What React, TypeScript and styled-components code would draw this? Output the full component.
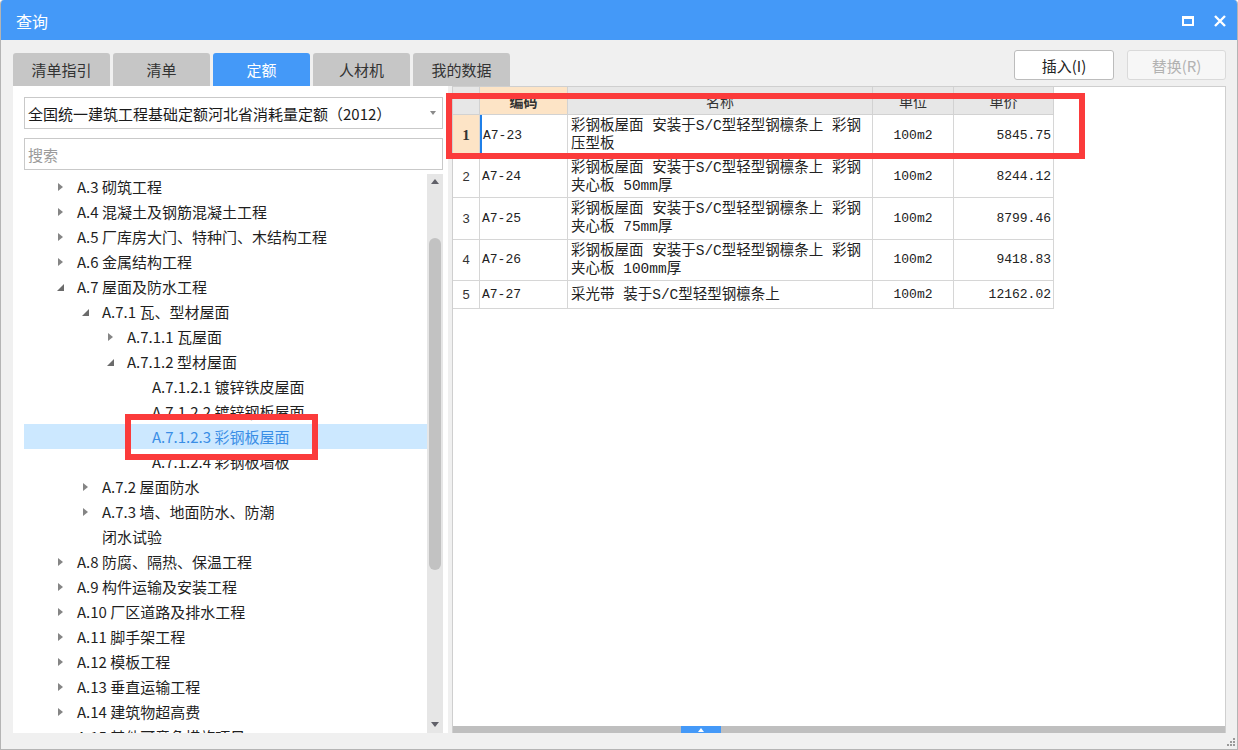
import React from "react";
import styled, { createGlobalStyle } from "styled-components";

const GlobalStyle = createGlobalStyle`
  html, body {
    margin: 0;
    padding: 0;
    background: #ffffff;
  }
  body {
    font-family: "Noto Sans CJK SC", "Noto Sans", sans-serif;
    color: #222;
  }
`;

const tabs = ["清单指引", "清单", "定额", "人材机", "我的数据"];

type TreeItem = {
  level: number;
  label: string[];
  caret?: "open" | "closed";
  selected?: boolean;
};

const tree: TreeItem[] = [
  { level: 1, label: ["A.3 砌筑工程"], caret: "closed" },
  { level: 1, label: ["A.4 混凝土及钢筋混凝土工程"], caret: "closed" },
  { level: 1, label: ["A.5 厂库房大门、特种门、木结构工程"], caret: "closed" },
  { level: 1, label: ["A.6 金属结构工程"], caret: "closed" },
  { level: 1, label: ["A.7 屋面及防水工程"], caret: "open" },
  { level: 2, label: ["A.7.1 瓦、型材屋面"], caret: "open" },
  { level: 3, label: ["A.7.1.1 瓦屋面"], caret: "closed" },
  { level: 3, label: ["A.7.1.2 型材屋面"], caret: "open" },
  { level: 4, label: ["A.7.1.2.1 镀锌铁皮屋面"] },
  { level: 4, label: ["A.7.1.2.2 镀锌钢板屋面"] },
  { level: 4, label: ["A.7.1.2.3 彩钢板屋面"], selected: true },
  { level: 4, label: ["A.7.1.2.4 彩钢板墙板"] },
  { level: 2, label: ["A.7.2 屋面防水"], caret: "closed" },
  { level: 2, label: ["A.7.3 墙、地面防水、防潮", "闭水试验"], caret: "closed" },
  { level: 1, label: ["A.8 防腐、隔热、保温工程"], caret: "closed" },
  { level: 1, label: ["A.9 构件运输及安装工程"], caret: "closed" },
  { level: 1, label: ["A.10 厂区道路及排水工程"], caret: "closed" },
  { level: 1, label: ["A.11 脚手架工程"], caret: "closed" },
  { level: 1, label: ["A.12 模板工程"], caret: "closed" },
  { level: 1, label: ["A.13 垂直运输工程"], caret: "closed" },
  { level: 1, label: ["A.14 建筑物超高费"], caret: "closed" },
  { level: 1, label: ["A.15 其他可竞争措施项目"], caret: "closed" },
];

const rows = [
  {
    no: 1,
    code: "A7-23",
    name: ["彩钢板屋面 安装于S/C型轻型钢檩条上 彩钢", "压型板"],
    unit: "100m2",
    price: "5845.75",
    active: true,
  },
  {
    no: 2,
    code: "A7-24",
    name: ["彩钢板屋面 安装于S/C型轻型钢檩条上 彩钢", "夹心板 50mm厚"],
    unit: "100m2",
    price: "8244.12",
  },
  {
    no: 3,
    code: "A7-25",
    name: ["彩钢板屋面 安装于S/C型轻型钢檩条上 彩钢", "夹心板 75mm厚"],
    unit: "100m2",
    price: "8799.46",
  },
  {
    no: 4,
    code: "A7-26",
    name: ["彩钢板屋面 安装于S/C型轻型钢檩条上 彩钢", "夹心板 100mm厚"],
    unit: "100m2",
    price: "9418.83",
  },
  {
    no: 5,
    code: "A7-27",
    name: ["采光带 装于S/C型轻型钢檩条上"],
    unit: "100m2",
    price: "12162.02",
  },
];

function App() {
  return (
    <>
      <GlobalStyle />
      <Window>
        <TitleBar>
          <span>查询</span>
          <TitleActions>
            <MaxIcon />
            <svg width="12" height="12" viewBox="0 0 12 12">
              <path d="M1 1 L11 11 M11 1 L1 11" stroke="#fff" strokeWidth="2.4" />
            </svg>
          </TitleActions>
        </TitleBar>

        <Body>
          <LeftCol>
            <Tabs>
              {tabs.map((t) => (
                <Tab key={t} $active={t === "定额"}>
                  {t}
                </Tab>
              ))}
            </Tabs>
            <LeftPanel>
              <SelectBox>
                <span>全国统一建筑工程基础定额河北省消耗量定额（2012）</span>
                <DropArrow />
              </SelectBox>
              <SearchBox>搜索</SearchBox>
              <TreeWrap>
                <TreeList>
                  {tree.map((item) => (
                    <TreeRow
                      key={item.label[0]}
                      $level={item.level}
                      $selected={!!item.selected}
                    >
                      <CaretSlot>
                        {item.caret && <Caret $open={item.caret === "open"} />}
                      </CaretSlot>
                      <TreeLabel>
                        {item.label.map((l) => (
                          <div key={l}>{l}</div>
                        ))}
                      </TreeLabel>
                    </TreeRow>
                  ))}
                </TreeList>
                <VScroll>
                  <ArrowUp />
                  <Thumb />
                  <ArrowDown />
                </VScroll>
              </TreeWrap>
            </LeftPanel>
          </LeftCol>

          <RightCol>
            <Toolbar>
              <Button>插入(I)</Button>
              <Button $disabled>替换(R)</Button>
            </Toolbar>
            <RightPanel>
              <Grid>
                <HeadCell />
                <HeadCell $active>编码</HeadCell>
                <HeadCell>名称</HeadCell>
                <HeadCell>单位</HeadCell>
                <HeadCell>单价</HeadCell>
                {rows.map((r) => {
                  const h = r.name.length > 1 ? 41.5 : 28;
                  return (
                    <React.Fragment key={r.code}>
                      <NumCell $h={h} $active={!!r.active}>
                        {r.no}
                      </NumCell>
                      <Cell $h={h} $focus={!!r.active}>
                        {r.code}
                      </Cell>
                      <NameCell $h={h}>
                        {r.name.map((l) => (
                          <div key={l}>{l}</div>
                        ))}
                      </NameCell>
                      <Cell $h={h} $align="center">
                        {r.unit}
                      </Cell>
                      <Cell $h={h} $align="flex-end">
                        {r.price}
                      </Cell>
                    </React.Fragment>
                  );
                })}
              </Grid>
              <HScroll>
                <Handle>
                  <HandleArrow />
                </Handle>
              </HScroll>
            </RightPanel>
          </RightCol>
        </Body>

        <Mark style={{ left: 445, top: 93, width: 639, height: 66 }} />
        <Mark style={{ left: 124, top: 414, width: 193, height: 46 }} />
        <Grip width="8" height="8" viewBox="0 0 8 8">
          <rect x="6" y="0" width="2" height="2" fill="#9a9a9a" />
          <rect x="3" y="3" width="2" height="2" fill="#9a9a9a" />
          <rect x="6" y="3" width="2" height="2" fill="#9a9a9a" />
          <rect x="0" y="6" width="2" height="2" fill="#9a9a9a" />
          <rect x="3" y="6" width="2" height="2" fill="#9a9a9a" />
          <rect x="6" y="6" width="2" height="2" fill="#9a9a9a" />
        </Grip>
      </Window>
    </>
  );
}

const Window = styled.div`
  position: relative;
  width: 1238px;
  height: 750px;
  box-sizing: border-box;
  display: flex;
  flex-direction: column;
  background: #f0f0f0;
  border: 1px solid #b4b4b4;
  border-top: none;
  border-radius: 4px 4px 0 0;
  overflow: hidden;
`;

const TitleBar = styled.div`
  height: 40px;
  flex-shrink: 0;
  display: flex;
  align-items: center;
  justify-content: space-between;
  padding: 2px 11px 0 15px;
  box-sizing: border-box;
  background: #4499f8;
  color: #fff;
  font-size: 16px;
`;

const TitleActions = styled.div`
  display: flex;
  align-items: center;
  gap: 20px;
`;

const MaxIcon = styled.span`
  width: 12px;
  height: 10px;
  box-sizing: border-box;
  border: 2px solid #fff;
  border-top-width: 3px;
`;

const Body = styled.div`
  flex: 1;
  min-height: 0;
  display: flex;
  gap: 4px;
  padding: 10px 11px 16px 12px;
`;

const LeftCol = styled.div`
  width: 435px;
  flex-shrink: 0;
  display: flex;
  flex-direction: column;
`;

const Tabs = styled.div`
  display: flex;
  gap: 3px;
  margin-top: 3px;
  height: 33px;
  flex-shrink: 0;
`;

const Tab = styled.div<{ $active?: boolean }>`
  width: 97px;
  flex-shrink: 0;
  display: flex;
  align-items: center;
  justify-content: center;
  border-radius: 3px 3px 0 0;
  font-size: 15px;
  background: ${(p) => (p.$active ? "#4499f8" : "#c6c6c6")};
  color: ${(p) => (p.$active ? "#fff" : "#333")};
`;

const LeftPanel = styled.div`
  flex: 1;
  min-height: 0;
  display: flex;
  flex-direction: column;
  background: #fff;
  padding: 11px 5px 0 11px;
`;

const SelectBox = styled.div`
  height: 32px;
  flex-shrink: 0;
  box-sizing: border-box;
  border: 1px solid #c9c9c9;
  display: flex;
  align-items: center;
  justify-content: space-between;
  padding: 0 6px 0 3px;
  font-size: 15px;
  color: #1a1a1a;
`;

const DropArrow = styled.span`
  width: 0;
  height: 0;
  border-left: 3.5px solid transparent;
  border-right: 3.5px solid transparent;
  border-top: 4px solid #8a8a8a;
`;

const SearchBox = styled.div`
  height: 32px;
  flex-shrink: 0;
  margin-top: 9px;
  box-sizing: border-box;
  border: 1px solid #c9c9c9;
  display: flex;
  align-items: center;
  padding: 0 3px;
  font-size: 15px;
  color: #9a9a9a;
`;

const TreeWrap = styled.div`
  flex: 1;
  min-height: 0;
  margin-top: 4px;
  display: flex;
`;

const TreeList = styled.div`
  flex: 1;
  overflow: hidden;
`;

const TreeRow = styled.div<{ $level: number; $selected: boolean }>`
  display: flex;
  align-items: flex-start;
  padding-left: ${(p) => 33 + (p.$level - 1) * 25}px;
  line-height: 25px;
  font-size: 15px;
  white-space: nowrap;
  background: ${(p) => (p.$selected ? "#cce8ff" : "transparent")};
  color: ${(p) => (p.$selected ? "#3a8ee6" : "#1f1f1f")};
`;

const CaretSlot = styled.span`
  width: 20px;
  height: 25px;
  flex-shrink: 0;
  display: flex;
  align-items: center;
`;

const Caret = styled.span<{ $open: boolean }>`
  width: 0;
  height: 0;
  ${(p) =>
    p.$open
      ? `
    border-left: 7px solid transparent;
    border-bottom: 7px solid #6b6b6b;
    margin-top: 2px;
  `
      : `
    border-top: 4.5px solid transparent;
    border-bottom: 4.5px solid transparent;
    border-left: 5px solid #858585;
    margin-left: 1px;
  `}
`;

const TreeLabel = styled.div``;

const VScroll = styled.div`
  width: 16px;
  background: #e6e6e6;
  display: flex;
  flex-direction: column;
  align-items: center;
`;

const ArrowUp = styled.span`
  margin-top: 5px;
  width: 0;
  height: 0;
  border-left: 4.5px solid transparent;
  border-right: 4.5px solid transparent;
  border-bottom: 5px solid #606068;
`;

const ArrowDown = styled.span`
  margin-top: auto;
  margin-bottom: 6px;
  width: 0;
  height: 0;
  border-left: 4.5px solid transparent;
  border-right: 4.5px solid transparent;
  border-top: 5px solid #606068;
`;

const Thumb = styled.span`
  margin-top: 54px;
  width: 12px;
  height: 332px;
  border-radius: 6px;
  background: #c2c2c2;
`;

const RightCol = styled.div`
  flex: 1;
  display: flex;
  flex-direction: column;
`;

const Toolbar = styled.div`
  height: 36px;
  flex-shrink: 0;
  display: flex;
  justify-content: flex-end;
  align-items: flex-start;
  gap: 13px;
`;

const Button = styled.div<{ $disabled?: boolean }>`
  width: ${(p) => (p.$disabled ? 99 : 100)}px;
  height: 30px;
  box-sizing: border-box;
  display: flex;
  align-items: center;
  justify-content: center;
  border-radius: 3px;
  font-size: 15px;
  border: 1px solid ${(p) => (p.$disabled ? "#dadada" : "#bcbcbc")};
  background: ${(p) => (p.$disabled ? "#f7f7f7" : "#fff")};
  color: ${(p) => (p.$disabled ? "#b2b2b2" : "#222")};
`;

const RightPanel = styled.div`
  flex: 1;
  min-height: 0;
  display: flex;
  flex-direction: column;
  background: #fff;
  border: 1px solid #cfcfcf;
  border-bottom: none;
`;

const Grid = styled.div`
  display: grid;
  grid-template-columns: 27px 88px 305px 81px 100px;
  width: 601px;
`;

const HeadCell = styled.div<{ $active?: boolean }>`
  height: 28px;
  box-sizing: border-box;
  border-right: 1px solid #d2d2d2;
  border-bottom: 1px solid #d2d2d2;
  display: flex;
  align-items: center;
  justify-content: center;
  font-size: 14px;
  font-weight: ${(p) => (p.$active ? 700 : 400)};
  background: ${(p) => (p.$active ? "#fde4c6" : "#e7e7e7")};
  color: #333;
`;

const Cell = styled.div<{
  $h: number;
  $align?: "flex-start" | "center" | "flex-end";
  $focus?: boolean;
}>`
  height: ${(p) => p.$h}px;
  box-sizing: border-box;
  border-right: 1px solid #d6d6d6;
  border-bottom: 1px solid #d6d6d6;
  display: flex;
  align-items: center;
  justify-content: ${(p) => p.$align || "flex-start"};
  padding: 0 2px;
  font-family: "Liberation Mono", "Noto Sans CJK SC", monospace;
  font-size: 13px;
  color: #222;
  ${(p) => (p.$focus ? "border-left: 2px solid #1f7fe8; padding-left: 1px;" : "")}
`;

const NameCell = styled.div<{ $h: number }>`
  height: ${(p) => p.$h}px;
  box-sizing: border-box;
  border-right: 1px solid #d6d6d6;
  border-bottom: 1px solid #d6d6d6;
  display: flex;
  flex-direction: column;
  justify-content: center;
  padding: 0 3px;
  font-family: "Liberation Mono", "Noto Sans CJK SC", monospace;
  font-size: 14.5px;
  line-height: 18px;
  white-space: nowrap;
  color: #222;
`;

const NumCell = styled.div<{ $h: number; $active: boolean }>`
  height: ${(p) => p.$h}px;
  box-sizing: border-box;
  border-right: 1px solid #d6d6d6;
  border-bottom: 1px solid #d6d6d6;
  display: flex;
  align-items: center;
  justify-content: center;
  font-family: ${(p) =>
    p.$active ? '"Liberation Serif", serif' : '"Liberation Sans", sans-serif'};
  font-weight: ${(p) => (p.$active ? 700 : 400)};
  font-size: ${(p) => (p.$active ? 15 : 13)}px;
  background: ${(p) => (p.$active ? "#fde4c6" : "#fff")};
  color: #333;
`;

const HScroll = styled.div`
  margin-top: auto;
  height: 7px;
  flex-shrink: 0;
  background: #bfbfbf;
  display: flex;
`;

const Handle = styled.div`
  margin-left: 228px;
  width: 40px;
  background: #4499f8;
  display: flex;
  align-items: center;
  justify-content: center;
`;

const HandleArrow = styled.span`
  width: 0;
  height: 0;
  border-left: 3.5px solid transparent;
  border-right: 3.5px solid transparent;
  border-bottom: 4px solid #fff;
`;

const Mark = styled.div`
  position: absolute;
  box-sizing: border-box;
  border: 6px solid #fb3b3b;
  pointer-events: none;
`;

const Grip = styled.svg`
  position: absolute;
  right: 2px;
  bottom: 3px;
`;

export default App;
